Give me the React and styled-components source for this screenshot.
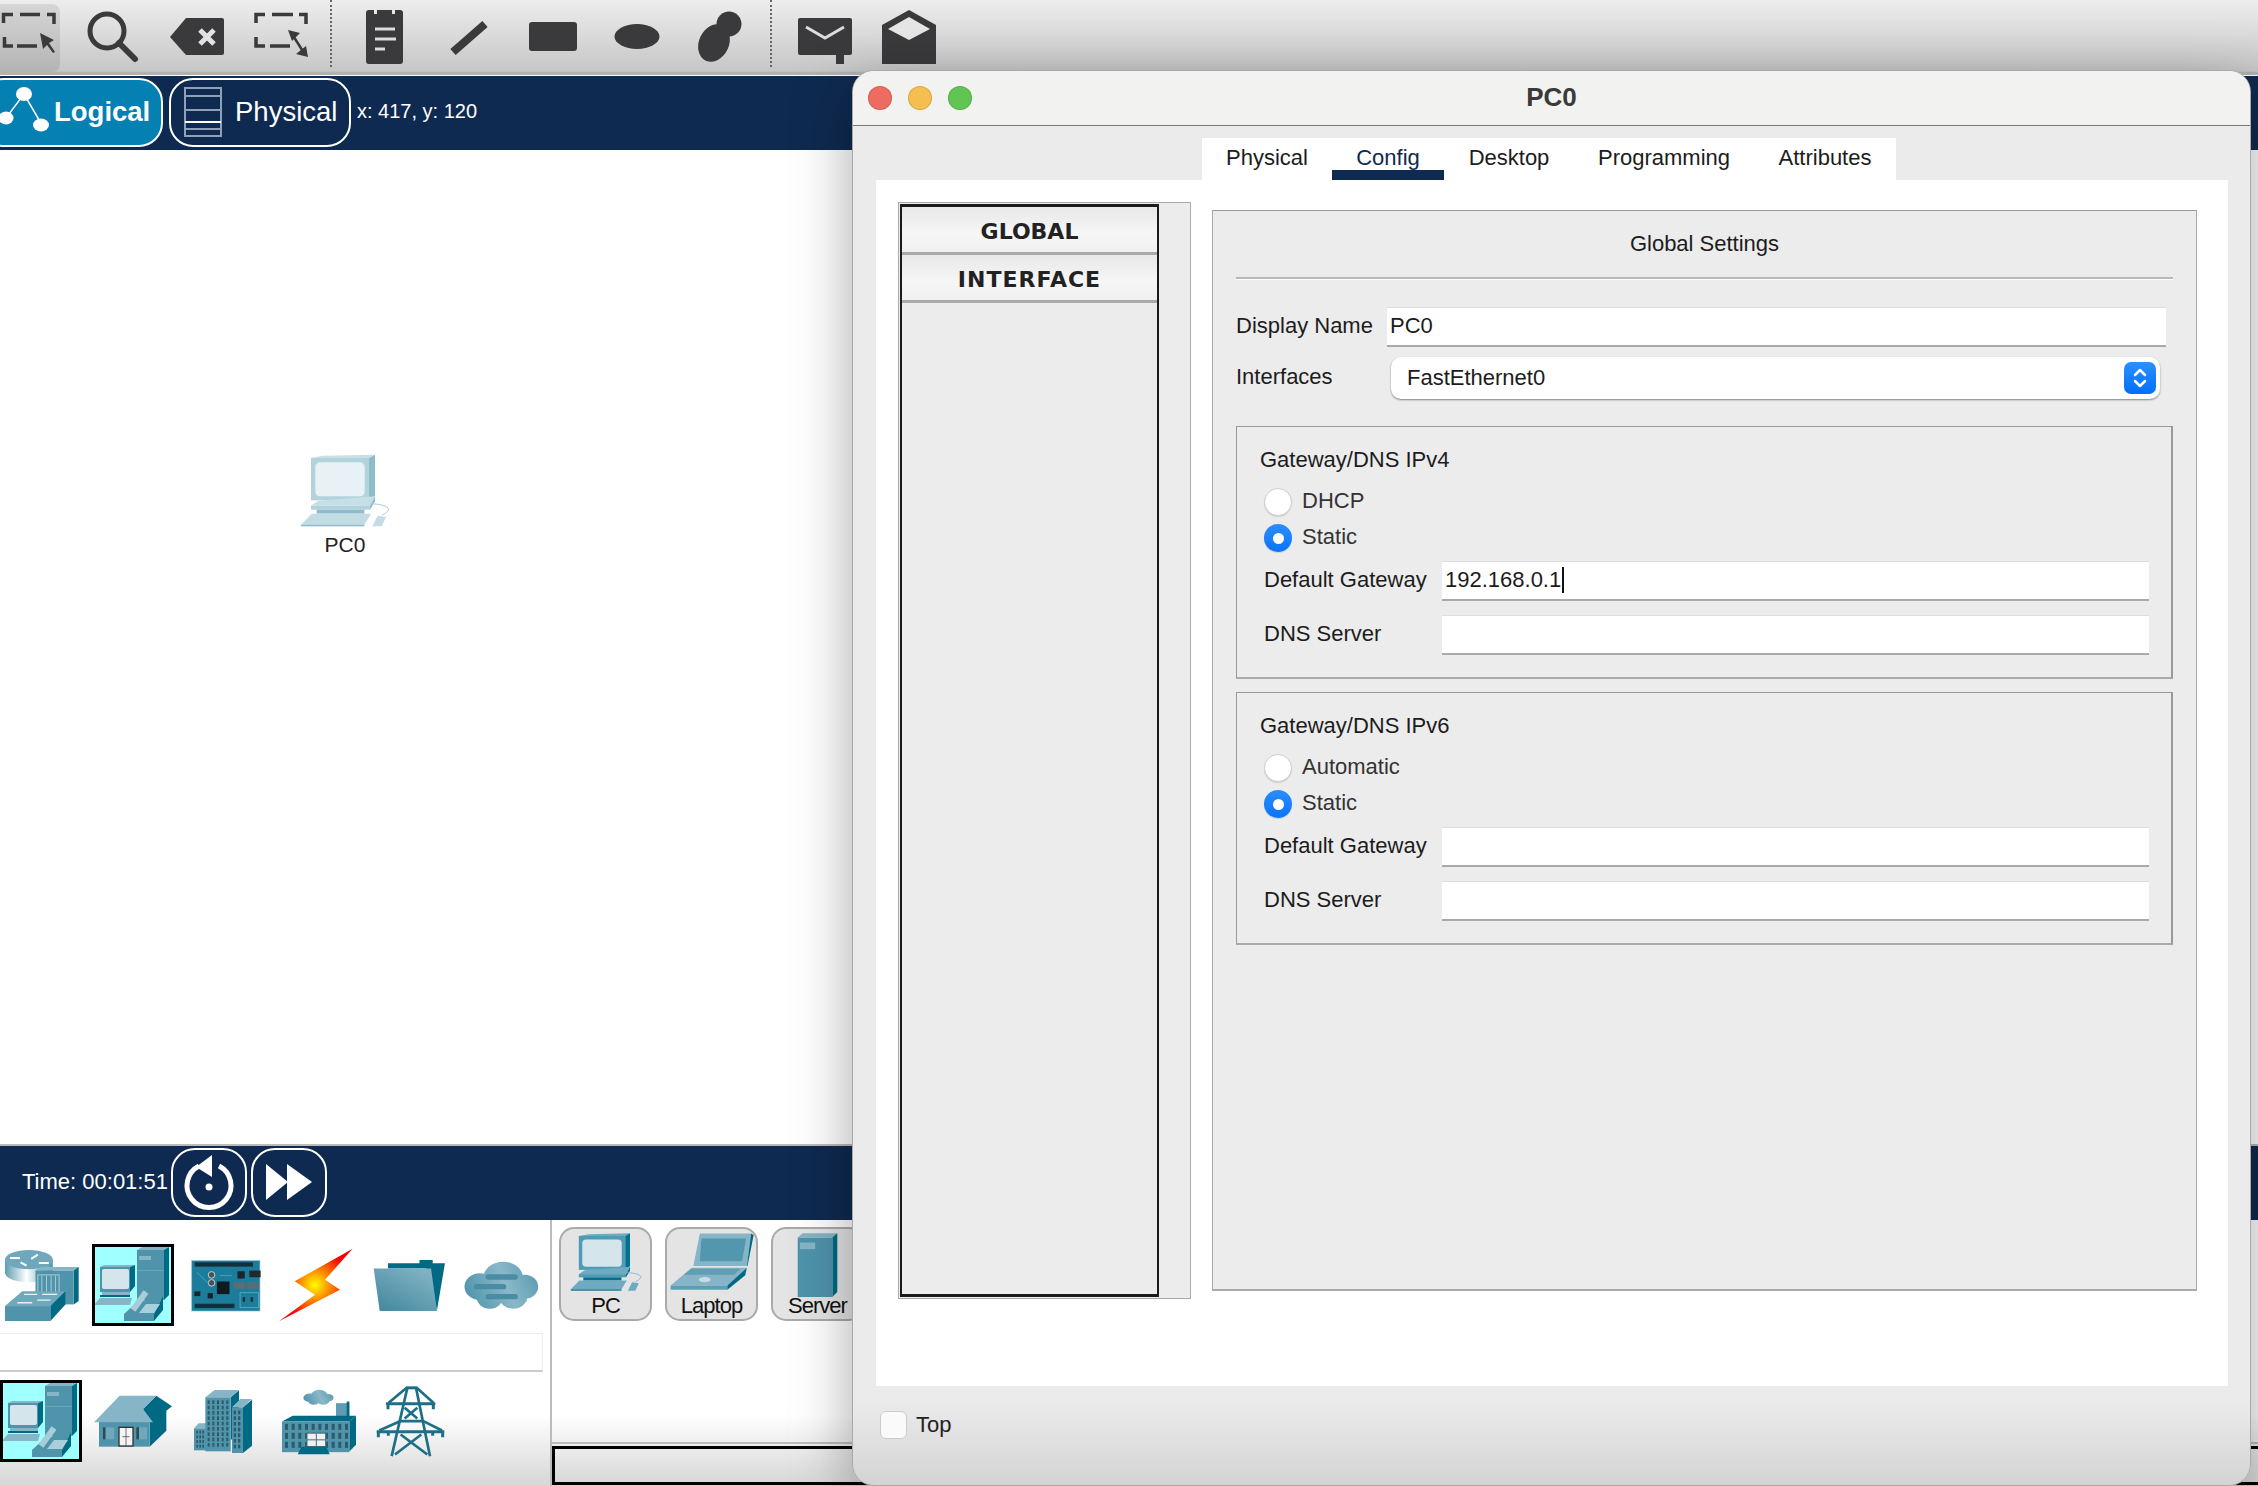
import React from 'react';
import styled, { createGlobalStyle } from 'styled-components';

const NAVY = '#0f2a50';
const TEAL = '#4f94ab';
const TEAL_LIGHT = '#85b5c6';
const TEAL_DARK = '#006a85';
const INK = '#3a3a3c';

const GlobalStyle = createGlobalStyle`
  html, body {
    margin: 0;
    width: 2258px;
    height: 1486px;
    overflow: hidden;
    background: #fff;
    font-family: "Liberation Sans", Arial, sans-serif;
    font-size: 22px;
    color: #1c1c1c;
  }
`;

const Page = styled.div`
  position: relative;
  width: 2258px;
  height: 1486px;
  display: flex;
  flex-direction: column;
  overflow: hidden;
`;

/* toolbar */
const Toolbar = styled.div`
  height: 72px;
  flex: none;
  display: flex;
  background: linear-gradient(#ededed, #c6c6c6);
  border-bottom: 3px solid #b2b2b2;
  box-shadow: inset 0 -1px 0 #c0c0c0;
  margin-bottom: 1px;
`;
const ActiveTool = styled.div`
  width: 60px;
  height: 68px;
  margin-top: 4px;
  flex: none;
  display: flex;
  background: linear-gradient(#d6d6d6, #b4b4b4);
  border-radius: 0 8px 8px 0;
`;
const ToolDivider = styled.div`
  width: 22px;
  height: 67px;
  flex: none;
  display: flex;
  justify-content: center;
  &::before {
    content: '';
    border-left: 2px dotted #666;
  }
`;
const Tool = ({ x, w, y = 0, h = 72, children }) => (
  <svg width={w} height={h} viewBox={`${x} ${y} ${w} ${h}`} fill={INK} style={{ flex: 'none' }}>
    {children}
  </svg>
);

/* navy bars */
const NavBar = styled.div`
  height: 74px;
  flex: none;
  box-sizing: border-box;
  padding-bottom: 2px;
  display: flex;
  align-items: center;
  gap: 6px;
  background: ${NAVY};
  color: #fff;
`;
const ModeButton = styled.div`
  box-sizing: border-box;
  height: 69px;
  width: ${(p) => p.$w}px;
  margin-left: ${(p) => p.$ml || 0}px;
  flex: none;
  display: flex;
  align-items: center;
  border: 2px solid #fff;
  border-radius: 24px;
  font-size: 27.5px;
  font-weight: ${(p) => (p.$active ? 700 : 400)};
  background: ${(p) => (p.$active ? '#0480b3' : 'transparent')};
`;
const Coords = styled.span`
  font-size: 20px;
  padding-bottom: 2px;
`;
const TimeLabel = styled.span`
  margin-left: 22px;
  margin-right: -3px;
  font-size: 22px;
`;
const RoundButton = styled.div`
  box-sizing: border-box;
  width: 76px;
  height: 69px;
  flex: none;
  display: flex;
  align-items: center;
  justify-content: center;
  border: 2px solid #fff;
  border-radius: 24px;
  margin-right: -2px;
`;

/* canvas */
const Canvas = styled.div`
  position: relative;
  flex: 1;
  background: #fff;
  border-bottom: 2px solid #bbb;
  box-sizing: border-box;
`;
const CanvasNode = styled.div`
  position: absolute;
  left: 295px;
  top: 303px;
  width: 100px;
  display: flex;
  flex-direction: column;
  align-items: center;
  gap: 5px;
  font-size: 21px;
  color: #222;
  line-height: 24px;
`;

/* bottom device picker */
const Bottom = styled.div`
  height: 266px;
  flex: none;
  display: flex;
  background: linear-gradient(#fff 0, #fff 195px, #d6d6d6 266px);
`;
const PickerLeft = styled.div`
  width: 550px;
  flex: none;
  display: flex;
  flex-direction: column;
`;
const IconRow = styled.div`
  height: ${(p) => p.$h}px;
  display: flex;
  align-items: center;
  padding-top: ${(p) => p.$pt || 0}px;
  box-sizing: border-box;
`;
const Slot = styled.div`
  margin-left: ${(p) => p.$ml || 0}px;
  flex: none;
  display: flex;
`;
const SelectedSlot = styled(Slot)`
  box-sizing: border-box;
  width: 82px;
  height: 82px;
  align-items: center;
  justify-content: center;
  background: #a0ffff;
  border: 3px solid #000;
`;
const SearchStrip = styled.div`
  width: 543px;
  height: 39px;
  flex: none;
  box-sizing: border-box;
  background: #fff;
  border-top: 1px solid #eee;
  border-right: 1px solid #eee;
  border-bottom: 2px solid #ccc;
`;
const PickerRight = styled.div`
  flex: 1;
  display: flex;
  flex-direction: column;
  border-left: 2px solid #bbb;
  min-width: 0;
`;
const TileRow = styled.div`
  height: 224px;
  flex: none;
  box-sizing: border-box;
  padding: 7px 0 0 7px;
  display: flex;
  gap: 13px;
  border-bottom: 2px solid #bbb;
`;
const Tile = styled.div`
  box-sizing: border-box;
  width: 93px;
  height: 94px;
  flex: none;
  display: flex;
  flex-direction: column;
  align-items: center;
  background: #e4e4e4;
  border: 2px solid #aaa;
  border-radius: 15px;
  padding-top: 3px;
`;
const TileIcon = styled.div`
  height: 62px;
  flex: none;
  display: flex;
  align-items: flex-start;
  justify-content: center;
`;
const TileLabel = styled.span`
  font-size: 22px;
  letter-spacing: -1px;
  line-height: 24px;
  color: #111;
`;
const InfoBox = styled.div`
  flex: 1;
  margin: 2px 0 1px;
  border: 3px solid #000;
  border-right: 0;
`;

/* dialog window */
const Window = styled.div`
  position: absolute;
  left: 852px;
  top: 70px;
  width: 1399px;
  height: 1416px;
  box-sizing: border-box;
  display: flex;
  flex-direction: column;
  background: linear-gradient(#ebebeb 0, #ebebeb 1330px, #d3d3d3 1416px);
  border: 1px solid #aaa;
  border-radius: 22px;
  box-shadow: 0 18px 60px rgba(0, 0, 0, 0.34);
  overflow: hidden;
`;
const TitleBar = styled.div`
  position: relative;
  height: 55px;
  flex: none;
  box-sizing: border-box;
  padding-bottom: 2px;
  display: flex;
  align-items: center;
  justify-content: center;
  background: #f2f2f0;
  border-bottom: 1px solid #777;
  font-size: 26px;
  font-weight: 700;
  color: #3a3a3a;
`;
const Lights = styled.div`
  position: absolute;
  left: 15px;
  top: 15px;
  display: flex;
  gap: 16px;
`;
const Light = styled.span`
  width: 24px;
  height: 24px;
  border-radius: 50%;
  background: ${(p) => p.$c};
  box-shadow: inset 0 0 0 1px rgba(0, 0, 0, 0.12);
`;
const Tabs = styled.div`
  display: flex;
  align-self: flex-start;
  margin: 12px 0 0 349px;
  background: #fff;
  height: 42px;
  flex: none;
`;
const Tab = styled.div`
  position: relative;
  width: ${(p) => p.$w}px;
  text-align: center;
  line-height: 39px;
  color: ${(p) => (p.$active ? NAVY : '#1c1c1c')};
  &::after {
    content: '';
    display: ${(p) => (p.$active ? 'block' : 'none')};
    position: absolute;
    left: 0;
    right: 0;
    bottom: 0;
    height: 10px;
    background: ${NAVY};
  }
`;
const ContentPanel = styled.div`
  width: 1352px;
  height: 1206px;
  margin-left: 23px;
  flex: none;
  box-sizing: border-box;
  padding: 22px 0 0 22px;
  display: flex;
  align-items: flex-start;
  gap: 21px;
  background: #fff;
`;
const Sidebar = styled.div`
  width: 293px;
  height: 1097px;
  flex: none;
  box-sizing: border-box;
  background: #ececec;
  border: 1px solid #aaa;
  padding: 1px 0 1px 1px;
`;
const SideList = styled.div`
  width: 259px;
  height: 100%;
  box-sizing: border-box;
  border: 2px solid #1a1a1a;
  border-width: 3px 2px;
`;
const SideItem = styled.div`
  height: 48px;
  box-sizing: border-box;
  padding-top: 3px;
  display: flex;
  align-items: center;
  justify-content: center;
  background: linear-gradient(#e8e8e8, #f6f6f6 60%, #f0f0f0);
  border-bottom: 3px solid #aaa;
  font-family: "DejaVu Sans", sans-serif;
  font-weight: 700;
  font-size: 22px;
  letter-spacing: ${(p) => (p.$wide ? '1px' : '0')};
  color: #222;
`;
const Settings = styled.div`
  width: 985px;
  height: 1081px;
  margin-top: 8px;
  flex: none;
  box-sizing: border-box;
  padding: 0 23px;
  background: #ececec;
  border: 1px solid #aaa;
  border-top-color: #999;
  border-bottom-width: 2px;
`;
const SettingsTitle = styled.div`
  height: 68px;
  display: flex;
  align-items: center;
  justify-content: center;
  box-sizing: border-box;
  border-bottom: 2px solid #b8b8b8;
  box-shadow: 0 1px 0 #fff;
`;
const FormRow = styled.div`
  display: flex;
  align-items: center;
  margin-top: ${(p) => p.$mt}px;
`;
const RowLabel = styled.span`
  width: ${(p) => p.$w}px;
  flex: none;
  padding-bottom: 2px;
`;
const Field = styled.div`
  box-sizing: border-box;
  height: 40px;
  flex: 1;
  margin-right: ${(p) => p.$mr || 0}px;
  display: flex;
  align-items: center;
  padding: 0 0 2px 3px;
  background: #fff;
  border-top: 1px solid #ddd;
  border-bottom: 2px solid #aaa;
`;
const Caret = styled.span`
  width: 2px;
  height: 26px;
  margin-left: 1px;
  background: #111;
`;
const SelectBox = styled.div`
  box-sizing: border-box;
  height: 42px;
  width: 769px;
  margin-left: 4px;
  display: flex;
  align-items: center;
  justify-content: space-between;
  padding: 0 4px 0 16px;
  background: #fff;
  border-radius: 10px;
  box-shadow: 0 1px 2px rgba(0, 0, 0, 0.45);
`;
const SelectArrows = styled.span`
  width: 32px;
  height: 32px;
  display: flex;
  align-items: center;
  justify-content: center;
  border-radius: 7px;
  background: linear-gradient(#2e90ff, #006fff);
`;
const Group = styled.div`
  box-sizing: border-box;
  width: 937px;
  height: 253px;
  margin-top: ${(p) => p.$mt}px;
  padding: 20px 22px 0 23px;
  border: 1px solid #999;
  border-bottom: 2px solid #aaa;
  border-right-width: 2px;
`;
const GroupTitle = styled.div`
  line-height: 26px;
`;
const RadioRow = styled.div`
  display: flex;
  align-items: center;
  gap: 10px;
  height: 28px;
  margin: ${(p) => p.$mt}px 0 0 4px;
  color: #333;
  line-height: 26px;
`;
const Radio = styled.span`
  box-sizing: border-box;
  width: 28px;
  height: 28px;
  flex: none;
  border-radius: 50%;
  display: flex;
  align-items: center;
  justify-content: center;
  background: ${(p) => (p.$on ? 'linear-gradient(#2a8dff, #0a74fb)' : '#fff')};
  border: ${(p) => (p.$on ? '0' : '1px solid #cfcfcf')};
  box-shadow: 0 1px 1px rgba(0, 0, 0, 0.12);
  &::after {
    content: '';
    display: ${(p) => (p.$on ? 'block' : 'none')};
    width: 11px;
    height: 11px;
    border-radius: 50%;
    background: #fff;
  }
`;
const RadioText = styled.span`
  padding-bottom: 2px;
`;
const GroupRow = styled.div`
  display: flex;
  align-items: center;
  margin: ${(p) => p.$mt}px 0 0 4px;
`;
const Footer = styled.div`
  display: flex;
  align-items: center;
  gap: 9px;
  margin: 25px 0 0 27px;
  color: #222;
`;
const Check = styled.span`
  box-sizing: border-box;
  width: 27px;
  height: 28px;
  border-radius: 6px;
  background: #fafafa;
  border: 1px solid #ccc;
`;

/* drawings */
const Poly = ({ p, f }) => <polygon points={p} fill={f} />;

const DeskPc = ({ w, h, light }) => {
  const c = light
    ? { front: '#b3d3dc', top: '#c6dfe6', side: '#8fbccb', screen: '#e8f1f5', kb: '#c3dce4', line: '#a9ccd6' }
    : { front: '#4f9ab5', top: '#6fabc0', side: '#00708f', screen: '#d5e5ec', kb: '#6fabc0', line: '#7fb0c2' };
  return (
    <svg width={w} height={h} viewBox="90 70 270 225">
      <Poly f={c.top} p="123,85 160,78 315,75 297,85" />
      <Poly f={c.side} p="297,85 315,75 315,198 297,212" />
      <rect x="123" y="85" width="174" height="127" fill={c.front} />
      <rect x="136" y="98" width="148" height="102" rx="14" fill={c.screen} />
      <Poly f={c.top} p="123,228 145,213 315,200 300,228" />
      <Poly f={c.side} p="300,228 315,200 315,215 300,240" />
      <rect x="123" y="228" width="177" height="12" fill={c.front} />
      <rect x="140" y="240" width="143" height="12" fill={c.side} />
      <Poly f={c.kb} p="93,285 125,252 303,252 283,285" />
      <rect x="93" y="285" width="190" height="5" fill={c.side} />
      <Poly f={c.kb} p="307,290 323,258 348,262 335,290" />
      <path d="M302 222 C340 224 365 232 352 246 C346 252 338 254 335 258" fill="none" stroke={c.line} strokeWidth="3" />
    </svg>
  );
};

const EndDevices = () => (
  <svg width="76" height="76" viewBox="3 3 76 76">
    <Poly f={TEAL_LIGHT} p="45,6 50,3 77,3 72,6" />
    <Poly f={TEAL_DARK} p="72,6 77,3 77,51 72,56" />
    <rect x="45" y="6" width="27" height="50" fill={TEAL} />
    <rect x="47" y="12" width="12" height="4" fill={TEAL_LIGHT} />
    <rect x="45" y="26" width="27" height="1" fill="#6aa5b9" />
    <Poly f={TEAL_LIGHT} p="8,23 12,21 43,21 38,23" />
    <Poly f={TEAL_DARK} p="38,23 43,21 43,42 38,48" />
    <rect x="8" y="23" width="30" height="25" fill={TEAL} />
    <rect x="10" y="25" width="27" height="20" rx="2" fill="#d5e5ec" />
    <rect x="10" y="48" width="28" height="3" fill={TEAL_LIGHT} />
    <rect x="8" y="51" width="30" height="2" fill={TEAL_DARK} />
    <Poly f={TEAL_LIGHT} p="2,61 8,54 40,54 38,61" />
    <Poly f={TEAL} p="32,70 45,58 71,52 62,70" />
    <rect x="32" y="70" width="30" height="7" fill={TEAL} />
    <Poly f={TEAL_DARK} p="62,70 71,52 71,66 62,77" />
    <Poly f="#a9cfda" p="47,69 62,69 68,60 54,60" />
    <path d="M41 66 L54 48" stroke="#a8ccd8" strokeWidth="6" />
  </svg>
);

const RouterSwitch = () => (
  <svg width="75" height="73" viewBox="10 68 226 220">
    <defs>
      <linearGradient id="drum" x1="0" x2="1" y1="0" y2="0">
        <stop offset="0" stopColor="#5d9cb0" />
        <stop offset="0.45" stopColor="#fff" />
        <stop offset="1" stopColor="#4f94ab" />
      </linearGradient>
    </defs>
    <path d="M13 100 V138 C13 178 157 178 157 138 V100 Z" fill="url(#drum)" />
    <ellipse cx="85" cy="100" rx="72" ry="29" fill="#6fa7bb" />
    <path d="M28 95 H58 M115 110 H145 M112 85 L92 98 M60 108 L78 118" stroke="#fff" strokeWidth="6" />
    <Poly f={TEAL_LIGHT} p="105,133 120,122 235,122 220,133" />
    <Poly f={TEAL_DARK} p="220,133 235,122 235,225 220,235" />
    <rect x="105" y="133" width="115" height="102" fill={TEAL} />
    <rect x="112" y="146" width="64" height="60" fill="none" stroke="#a9cdd9" strokeWidth="3" />
    <path d="M124 148 V204 M138 148 V204 M152 148 V204 M165 148 V204" stroke="#a9cdd9" strokeWidth="3" />
    <Poly f="#6fa7bb" p="13,240 65,195 195,195 150,240" />
    <rect x="13" y="240" width="137" height="45" fill={TEAL} />
    <Poly f={TEAL_DARK} p="150,240 195,195 195,235 150,285" />
    <path d="M70 205 H110 M125 205 H170 M50 230 H95 M110 222 H150" stroke="#e8f3f6" strokeWidth="4" />
  </svg>
);

const Board = () => (
  <svg width="72" height="53" viewBox="570 100 215 160">
    <rect x="574" y="105" width="206" height="152" fill="#1c7c9c" stroke="#8fc0cf" strokeWidth="2" />
    <rect x="583" y="110" width="176" height="13" fill="#14303c" />
    <rect x="583" y="235" width="120" height="13" fill="#14303c" />
    <rect x="650" y="168" width="38" height="38" fill="#101a20" />
    <rect x="712" y="137" width="22" height="22" fill="#1a2429" />
    <rect x="748" y="135" width="34" height="20" fill="#22282b" />
    <rect x="622" y="203" width="16" height="16" fill="#1a2429" />
    <rect x="582" y="198" width="18" height="14" fill="#1a2429" />
    <rect x="700" y="170" width="36" height="20" rx="3" fill="#5a6d75" />
    <rect x="741" y="170" width="36" height="20" rx="3" fill="#5a6d75" />
    <circle cx="634" cy="148" r="10" fill="#46545a" stroke="#c6ced1" strokeWidth="3" />
    <circle cx="634" cy="172" r="10" fill="#46545a" stroke="#c6ced1" strokeWidth="3" />
    <rect x="720" y="202" width="55" height="45" fill="none" stroke="#6fb8cc" strokeWidth="2" />
    <rect x="728" y="215" width="7" height="14" fill="#14303c" />
    <rect x="752" y="215" width="7" height="14" fill="#14303c" />
    <path d="M590 140 L625 175 M660 150 H695" stroke="#66aec4" strokeWidth="2" />
  </svg>
);

const Bolt = () => (
  <svg width="75" height="74" viewBox="0 65 225 222">
    <defs>
      <radialGradient id="boltFill" gradientUnits="userSpaceOnUse" cx="108" cy="176" r="105">
        <stop offset="0" stopColor="#ffff00" />
        <stop offset="0.4" stopColor="#ff9000" />
        <stop offset="1" stopColor="#fa0000" />
      </radialGradient>
    </defs>
    <Poly f="url(#boltFill)" p="221,67 47,165 108,205 0,285 183,190 138,160" />
  </svg>
);

const Folder = () => (
  <svg width="73" height="53" viewBox="280 95 220 160">
    <defs>
      <linearGradient id="folderFill" x1="0.9" y1="0" x2="0.1" y2="1">
        <stop offset="0" stopColor="#85b5c6" />
        <stop offset="1" stopColor="#4488a0" />
      </linearGradient>
    </defs>
    <Poly f={TEAL_DARK} p="325,124 325,108 420,108 420,98 460,98 460,108 497,108 473,250 440,124" />
    <Poly f="url(#folderFill)" p="282,124 455,124 473,252 300,252" />
  </svg>
);

const CloudShape = ({ id }) => (
  <g fill={`url(#${id})`}>
    <ellipse cx="600" cy="175" rx="46" ry="40" />
    <ellipse cx="735" cy="175" rx="40" ry="36" />
    <ellipse cx="670" cy="150" rx="60" ry="50" />
    <ellipse cx="630" cy="205" rx="40" ry="36" />
    <ellipse cx="700" cy="205" rx="42" ry="36" />
    <rect x="600" y="150" width="140" height="70" />
  </g>
);
const CloudGradient = ({ id }) => (
  <linearGradient id={id} gradientUnits="userSpaceOnUse" x1="560" y1="210" x2="770" y2="120">
    <stop offset="0" stopColor="#4f94ab" />
    <stop offset="0.55" stopColor="#8ab8c8" />
    <stop offset="1" stopColor="#5a9ab0" />
  </linearGradient>
);

const Cloud = () => (
  <svg width="77" height="50" viewBox="550 95 230 150">
    <defs>
      <CloudGradient id="cloudFill" />
    </defs>
    <CloudShape id="cloudFill" />
    <rect x="617" y="138" width="97" height="16" rx="8" fill="#4a8ca3" />
    <rect x="582" y="167" width="97" height="16" rx="8" fill="#4a8ca3" />
    <rect x="617" y="197" width="97" height="16" rx="8" fill="#4a8ca3" />
  </svg>
);

const House = () => (
  <svg width="80" height="54" viewBox="280 500 240 162">
    <Poly f={TEAL_DARK} p="430,545 470,505 517,537 500,550 500,610 450,658 450,585" />
    <rect x="298" y="580" width="152" height="78" fill={TEAL} />
    <Poly f={TEAL_LIGHT} p="283,585 360,505 470,505 430,545 460,585" />
    <rect x="310" y="600" width="8" height="36" fill="#2f4a55" />
    <rect x="318" y="600" width="26" height="36" fill="#6fa7bb" />
    <rect x="410" y="600" width="8" height="36" fill="#2f4a55" />
    <rect x="418" y="600" width="24" height="36" fill="#6fa7bb" />
    <rect x="358" y="600" width="42" height="56" fill="#f4f4f4" stroke="#333" strokeWidth="4" />
    <path d="M379 602 V654 M368 628 H390" stroke="#333" strokeWidth="2" />
  </svg>
);

const Windows = ({ x, y, cols, rows, dx, dy, w, h }) => (
  <g fill="#2c5a6b">
    {Array.from({ length: rows * cols }, (_, i) => (
      <rect key={i} x={x + (i % cols) * dx} y={y + Math.floor(i / cols) * dy} width={w} height={h} />
    ))}
  </g>
);

const Buildings = () => (
  <svg width="60" height="65" viewBox="580 485 180 195">
    <Poly f={TEAL_LIGHT} p="583,603 597,588 625,588 617,603" />
    <rect x="583" y="603" width="36" height="66" fill={TEAL} />
    <Windows x={590} y={610} cols={3} rows={4} dx={9} dy={14} w={5} h={9} />
    <Poly f={TEAL_DARK} p="693,510 718,489 718,600 693,640" />
    <Poly f={TEAL_LIGHT} p="617,510 645,488 718,488 693,510" />
    <rect x="617" y="510" width="76" height="162" fill={TEAL} />
    <Windows x={624} y={519} cols={5} rows={9} dx={14} dy={16} w={6} h={11} />
    <Poly f={TEAL_DARK} p="730,540 757,517 757,655 730,677" />
    <Poly f={TEAL_LIGHT} p="697,540 722,515 757,515 730,540" />
    <rect x="697" y="540" width="33" height="137" fill={TEAL} />
    <Windows x={702} y={550} cols={2} rows={7} dx={13} dy={17} w={7} h={11} />
  </svg>
);

const Factory = () => (
  <svg width="76" height="67" viewBox="0 470 228 200">
    <defs>
      <CloudGradient id="smokeFill" />
    </defs>
    <g transform="translate(-160 443) scale(0.41 0.32)">
      <CloudShape id="smokeFill" />
    </g>
    <rect x="165" y="515" width="40" height="40" fill="#5d9cb2" />
    <rect x="197" y="510" width="8" height="45" fill={TEAL_DARK} />
    <Poly f={TEAL_DARK} p="3,570 35,553 225,553 205,570" />
    <Poly f={TEAL_DARK} p="205,570 225,553 225,640 205,660" />
    <rect x="3" y="570" width="202" height="92" fill={TEAL} />
    <Windows x={12} y={577} cols={10} rows={3} dx={20} dy={27} w={9} h={18} />
    <rect x="78" y="605" width="56" height="40" fill="#f0f0f0" stroke="#4a6c78" strokeWidth="3" />
    <path d="M106 605 V645 M78 625 H134" stroke="#4a6c78" strokeWidth="3" />
    <Poly f={TEAL_DARK} p="50,668 62,646 136,646 146,668" />
  </svg>
);

const Pylon = () => (
  <svg width="69" height="71" viewBox="288 485 207 212" fill="none" stroke="#1d6f88" strokeWidth="8">
    <path d="M382 490 L335 695 M408 490 L450 695" />
    <path d="M378 490 H412" strokeWidth="9" />
    <path d="M380 490 L326 535 M410 490 L460 535" />
    <path d="M318 538 H466 M324 538 V554 M460 538 V554" strokeWidth="9" />
    <path d="M374 550 L412 582 M412 550 L374 582" />
    <path d="M360 590 H430 M360 590 L298 618 M430 590 L486 618" />
    <path d="M290 622 H493 M295 622 V638 M325 622 V634 M458 622 V634 M488 622 V638" strokeWidth="9" />
    <path d="M362 630 L442 690 M424 630 L345 690" />
  </svg>
);

const Laptop = () => (
  <svg width="86" height="60" viewBox="350 25 265 185">
    <Poly f={TEAL_LIGHT} p="445,30 603,30 590,130 425,130" />
    <Poly f={TEAL_DARK} p="603,30 611,34 592,130 590,130" />
    <Poly f="#5297ae" p="450,45 588,45 575,115 445,115" />
    <Poly f={TEAL_LIGHT} p="355,190 420,135 590,135 530,190" />
    <Poly f="#5f9eb3" p="395,157 420,138 570,138 552,157" />
    <rect x="355" y="190" width="175" height="13" fill="#5b9fb5" />
    <Poly f={TEAL_DARK} p="530,190 590,135 585,158 530,203" />
    <ellipse cx="460" cy="172" rx="18" ry="8" fill="#c4dde4" />
  </svg>
);

const Server = () => (
  <svg width="43" height="66" viewBox="740 18 130 200" style={{ flex: 'none' }}>
    <Poly f={TEAL_LIGHT} p="745,35 760,22 865,22 850,35" />
    <Poly f={TEAL_DARK} p="850,35 865,22 865,200 850,215" />
    <rect x="745" y="35" width="105" height="180" fill={TEAL} />
    <rect x="752" y="50" width="46" height="20" fill={TEAL_LIGHT} />
  </svg>
);

const LogicalGlyph = () => (
  <svg width="54" height="65" viewBox="0 0 54 65" style={{ flex: 'none', marginLeft: 18 }}>
    <g stroke="#fff" strokeWidth="1.5">
      <path d="M6 38 L24 14 L42 45" fill="none" />
    </g>
    <g fill="#fff">
      <ellipse cx="24" cy="14" rx="8" ry="7" />
      <ellipse cx="6" cy="38" rx="7.5" ry="6.5" />
      <ellipse cx="41" cy="45" rx="8" ry="6.5" />
    </g>
  </svg>
);

const PhysicalGlyph = () => (
  <svg width="38" height="50" viewBox="0 0 38 50" style={{ flex: 'none', marginLeft: 13, marginRight: 13 }}>
    <rect x="1" y="1" width="36" height="48" fill="none" stroke="#8fa0b8" strokeWidth="2" />
    <path d="M1 9 H37 M1 23 H37 M1 42 H37" stroke="#8fa0b8" strokeWidth="2" />
    <path d="M1 35 H37" stroke="#fff" strokeWidth="2" />
  </svg>
);

const ReplayGlyph = () => (
  <svg width="54" height="58" viewBox="0 0 54 58">
    <path d="M17 13 A22 22 0 1 0 37 13" fill="none" stroke="#fff" strokeWidth="5" />
    <polygon points="14,14 30,2 30,24" fill="#fff" />
    <circle cx="27" cy="34" r="3.5" fill="#fff" />
  </svg>
);

const ForwardGlyph = () => (
  <svg width="50" height="36" viewBox="0 0 50 36">
    <polygon points="2,0 24,18 2,36" fill="#fff" />
    <polygon points="23,0 48,18 23,36" fill="#fff" />
  </svg>
);

const SelectGlyph = () => (
  <svg width="16" height="24" viewBox="0 0 16 24" fill="none" stroke="#fff" strokeWidth="2.5" strokeLinecap="round" strokeLinejoin="round">
    <path d="M3 9 L8 4 L13 9" />
    <path d="M3 15 L8 20 L13 15" />
  </svg>
);

const ipv4 = { title: 'Gateway/DNS IPv4', first: 'DHCP', gateway: '192.168.0.1', focused: true, mt: 27 };
const ipv6 = { title: 'Gateway/DNS IPv6', first: 'Automatic', gateway: '', focused: false, mt: 13 };

const IpGroup = ({ data }) => (
  <Group $mt={data.mt}>
    <GroupTitle>{data.title}</GroupTitle>
    <RadioRow $mt={15}>
      <Radio />
      <RadioText>{data.first}</RadioText>
    </RadioRow>
    <RadioRow $mt={8}>
      <Radio $on />
      <RadioText>Static</RadioText>
    </RadioRow>
    <GroupRow $mt={9}>
      <RowLabel $w={178}>Default Gateway</RowLabel>
      <Field>
        {data.gateway}
        {data.focused && <Caret />}
      </Field>
    </GroupRow>
    <GroupRow $mt={14}>
      <RowLabel $w={178}>DNS Server</RowLabel>
      <Field />
    </GroupRow>
  </Group>
);

const App = () => (
  <Page>
    <GlobalStyle />
    <Toolbar>
      <ActiveTool>
        <Tool x={0} y={4} w={60} h={68}>
          <path d="M3.5 23 V14.5 H13 M20 14.5 H40 M47 14.5 H54 V24 M4.5 37 V46 H13 M17 46 H37" fill="none" stroke={INK} strokeWidth="3.5" />
          <polygon points="40,33 54,40 49,43 55,52 53,53 47,45 43,49" />
        </Tool>
      </ActiveTool>
      <Tool x={60} w={95}>
        <circle cx="107" cy="31" r="17" fill="none" stroke={INK} strokeWidth="5" />
        <path d="M119 43 L135 59" stroke={INK} strokeWidth="6" strokeLinecap="round" />
      </Tool>
      <Tool x={155} w={85}>
        <path d="M170 37 L186 18 H222 Q224 18 224 20 V53 Q224 55 222 55 H186 Z" />
        <path d="M200 30 L214 44 M214 30 L200 44" stroke="#e2e2e2" strokeWidth="5" />
      </Tool>
      <Tool x={240} w={80}>
        <path d="M256 23 V14.5 H265 M272 14.5 H293 M299 14.5 H306 V24 M256 37 V46 H265 M270 46 H290" fill="none" stroke={INK} strokeWidth="3.5" />
        <path d="M292 34 L304 53" stroke={INK} strokeWidth="2.5" />
        <polygon points="288,30 300,33 292,41" />
        <polygon points="308,57 296,54 306,46" />
      </Tool>
      <ToolDivider />
      <Tool x={342} w={83}>
        <path d="M369 10 H374 V14 H377 V10 H392 V14 H395 V10 H400 Q403 10 403 13 V61 Q403 64 400 64 H369 Q366 64 366 61 V13 Q366 10 369 10 Z" />
        <path d="M375 29 H395 M375 39 H396 M375 49 H385" stroke="#dcdcdc" strokeWidth="3" />
      </Tool>
      <Tool x={425} w={80}>
        <path d="M453 52 L485 24" stroke={INK} strokeWidth="8" />
      </Tool>
      <Tool x={505} w={90}>
        <rect x="529" y="22" width="48" height="29" rx="3" />
      </Tool>
      <Tool x={595} w={85}>
        <ellipse cx="637" cy="36.5" rx="22.5" ry="12.5" />
      </Tool>
      <Tool x={680} w={80}>
        <ellipse cx="714" cy="43" rx="15" ry="19.5" transform="rotate(25 714 43)" />
        <circle cx="729" cy="24" r="12.5" />
      </Tool>
      <ToolDivider />
      <Tool x={782} w={83}>
        <rect x="798" y="18" width="54" height="37" rx="2" />
        <rect x="836" y="54" width="8" height="10" />
        <path d="M806 27 L825 38 L844 27" fill="none" stroke="#dcdcdc" strokeWidth="3" />
      </Tool>
      <Tool x={865} w={85}>
        <polygon points="882,25 909,10 936,25 936,64 882,64" />
        <polygon points="888,29 909,17 930,29 909,40" fill="#e6e6e6" />
      </Tool>
    </Toolbar>

    <NavBar>
      <ModeButton $active $w={183} $ml={-20}>
        <LogicalGlyph />
        Logical
      </ModeButton>
      <ModeButton $w={182}>
        <PhysicalGlyph />
        Physical
      </ModeButton>
      <Coords>x: 417, y: 120</Coords>
    </NavBar>

    <Canvas>
      <CanvasNode>
        <DeskPc w={90} h={75} light />
        PC0
      </CanvasNode>
    </Canvas>

    <NavBar>
      <TimeLabel>Time: 00:01:51</TimeLabel>
      <RoundButton>
        <ReplayGlyph />
      </RoundButton>
      <RoundButton>
        <ForwardGlyph />
      </RoundButton>
    </NavBar>

    <Bottom>
      <PickerLeft>
        <IconRow $h={113} $pt={17}>
          <Slot $ml={4}>
            <RouterSwitch />
          </Slot>
          <SelectedSlot $ml={13}>
            <EndDevices />
          </SelectedSlot>
          <Slot $ml={16}>
            <Board />
          </Slot>
          <Slot $ml={17}>
            <Bolt />
          </Slot>
          <Slot $ml={19}>
            <Folder />
          </Slot>
          <Slot $ml={17}>
            <Cloud />
          </Slot>
        </IconRow>
        <SearchStrip />
        <IconRow $h={98}>
          <SelectedSlot>
            <EndDevices />
          </SelectedSlot>
          <Slot $ml={11}>
            <House />
          </Slot>
          <Slot $ml={20}>
            <Buildings />
          </Slot>
          <Slot $ml={28}>
            <Factory />
          </Slot>
          <Slot $ml={19}>
            <Pylon />
          </Slot>
        </IconRow>
      </PickerLeft>
      <PickerRight>
        <TileRow>
          <Tile>
            <TileIcon>
              <DeskPc w={72} h={60} />
            </TileIcon>
            <TileLabel>PC</TileLabel>
          </Tile>
          <Tile>
            <TileIcon>
              <Laptop />
            </TileIcon>
            <TileLabel>Laptop</TileLabel>
          </Tile>
          <Tile>
            <TileIcon>
              <Server />
            </TileIcon>
            <TileLabel>Server</TileLabel>
          </Tile>
        </TileRow>
        <InfoBox />
      </PickerRight>
    </Bottom>

    <Window>
      <TitleBar>
        <Lights>
          <Light $c="#ee6b60" />
          <Light $c="#f5bf4f" />
          <Light $c="#61c554" />
        </Lights>
        PC0
      </TitleBar>
      <Tabs>
        <Tab $w={130}>Physical</Tab>
        <Tab $w={112} $active>Config</Tab>
        <Tab $w={130}>Desktop</Tab>
        <Tab $w={180}>Programming</Tab>
        <Tab $w={142}>Attributes</Tab>
      </Tabs>
      <ContentPanel>
        <Sidebar>
          <SideList>
            <SideItem>GLOBAL</SideItem>
            <SideItem $wide>INTERFACE</SideItem>
          </SideList>
        </Sidebar>
        <Settings>
          <SettingsTitle>Global Settings</SettingsTitle>
          <FormRow $mt={28}>
            <RowLabel $w={151}>Display Name</RowLabel>
            <Field $mr={7}>PC0</Field>
          </FormRow>
          <FormRow $mt={10}>
            <RowLabel $w={151}>Interfaces</RowLabel>
            <SelectBox>
              FastEthernet0
              <SelectArrows>
                <SelectGlyph />
              </SelectArrows>
            </SelectBox>
          </FormRow>
          <IpGroup data={ipv4} />
          <IpGroup data={ipv6} />
        </Settings>
      </ContentPanel>
      <Footer>
        <Check />
        Top
      </Footer>
    </Window>
  </Page>
);

export default App;
